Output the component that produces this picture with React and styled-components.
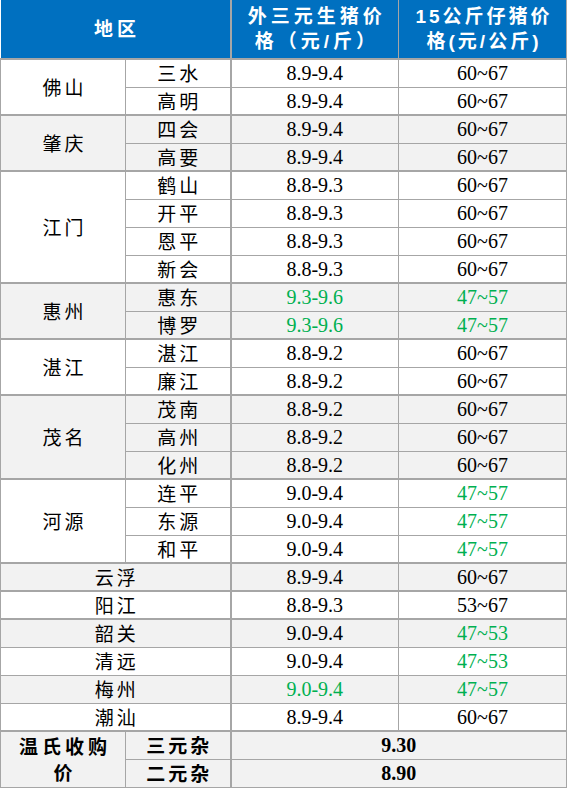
import React from "react";
import styled, { createGlobalStyle } from "styled-components";

const GlobalStyle = createGlobalStyle`
  html, body {
    margin: 0;
    padding: 0;
    background: #fff;
  }
`;

const GREEN = "#00B050";
const LINE = "#A6A6A6";

const groups = [
  {
    name: "佛山",
    gray: false,
    items: [
      ["三水", "8.9-9.4", "60~67"],
      ["高明", "8.9-9.4", "60~67"],
    ],
  },
  {
    name: "肇庆",
    gray: true,
    items: [
      ["四会", "8.9-9.4", "60~67"],
      ["高要", "8.9-9.4", "60~67"],
    ],
  },
  {
    name: "江门",
    gray: false,
    items: [
      ["鹤山", "8.8-9.3", "60~67"],
      ["开平", "8.8-9.3", "60~67"],
      ["恩平", "8.8-9.3", "60~67"],
      ["新会", "8.8-9.3", "60~67"],
    ],
  },
  {
    name: "惠州",
    gray: true,
    items: [
      ["惠东", "9.3-9.6", "47~57", true, true],
      ["博罗", "9.3-9.6", "47~57", true, true],
    ],
  },
  {
    name: "湛江",
    gray: false,
    items: [
      ["湛江", "8.8-9.2", "60~67"],
      ["廉江", "8.8-9.2", "60~67"],
    ],
  },
  {
    name: "茂名",
    gray: true,
    items: [
      ["茂南", "8.8-9.2", "60~67"],
      ["高州", "8.8-9.2", "60~67"],
      ["化州", "8.8-9.2", "60~67"],
    ],
  },
  {
    name: "河源",
    gray: false,
    items: [
      ["连平", "9.0-9.4", "47~57", false, true],
      ["东源", "9.0-9.4", "47~57", false, true],
      ["和平", "9.0-9.4", "47~57", false, true],
    ],
  },
];

const singles = [
  { name: "云浮", gray: true, thick: true, price: "8.9-9.4", piglet: "60~67" },
  { name: "阳江", gray: false, thick: true, price: "8.8-9.3", piglet: "53~67" },
  { name: "韶关", gray: true, thick: true, price: "9.0-9.4", piglet: "47~53", pg: true },
  { name: "清远", gray: false, thick: false, price: "9.0-9.4", piglet: "47~53", pg: true },
  { name: "梅州", gray: true, thick: false, price: "9.0-9.4", piglet: "47~57", cg: true, pg: true },
  { name: "潮汕", gray: false, thick: false, price: "8.9-9.4", piglet: "60~67" },
];

export default function App() {
  return (
    <>
      <GlobalStyle />
      <Table>
        <colgroup>
          <col style={{ width: 125 }} />
          <col style={{ width: 105 }} />
          <col style={{ width: 168 }} />
          <col style={{ width: 168 }} />
        </colgroup>
        <thead>
          <tr>
            <Head colSpan={2} thickRight>地区</Head>
            <Head>外三元生猪价<br />格（元/斤）</Head>
            <Head narrow>15公斤仔猪价<br />格(元/公斤)</Head>
          </tr>
        </thead>
        <tbody>
          {groups.map((g) =>
            g.items.map(([sub, price, piglet, cg, pg], i) => (
              <Row key={sub + g.name} gray={g.gray}>
                {i === 0 && (
                  <Cell rowSpan={g.items.length} thickTop>
                    <Name>{g.name}</Name>
                  </Cell>
                )}
                <Cell thickTop={i === 0} thickRight>
                  <Name>{sub}</Name>
                </Cell>
                <Cell thickTop={i === 0} green={cg}>{price}</Cell>
                <Cell thickTop={i === 0} green={pg}>{piglet}</Cell>
              </Row>
            ))
          )}
          {singles.map((s) => (
            <Row key={s.name} gray={s.gray}>
              <Cell colSpan={2} thickTop={s.thick} thickRight>
                <Name>{s.name}</Name>
              </Cell>
              <Cell thickTop={s.thick} green={s.cg}>{s.price}</Cell>
              <Cell thickTop={s.thick} green={s.pg}>{s.piglet}</Cell>
            </Row>
          ))}
          <Row gray>
            <Cell rowSpan={2} thickTop>
              <Buy>温氏收购<br />价</Buy>
            </Cell>
            <Cell thickTop thickRight>
              <Kind>三元杂</Kind>
            </Cell>
            <Cell colSpan={2} thickTop bold>9.30</Cell>
          </Row>
          <Row gray>
            <Cell thickRight>
              <Kind>二元杂</Kind>
            </Cell>
            <Cell colSpan={2} bold>8.90</Cell>
          </Row>
        </tbody>
      </Table>
    </>
  );
}

const Table = styled.table`
  width: 566px;
  table-layout: fixed;
  border-collapse: collapse;
  font-family: "Liberation Serif", "Noto Sans CJK SC", serif;
  color: #000;
`;

const Head = styled.th`
  height: 58px;
  padding: 0 0 0 ${(p) => (p.narrow ? "3px" : "4px")};
  background: #0070C0;
  color: #fff;
  font-family: "Liberation Sans", "Noto Sans CJK SC", sans-serif;
  font-weight: bold;
  font-size: 19px;
  letter-spacing: ${(p) => (p.narrow ? "3px" : "4px")};
  line-height: 25px;
  text-align: center;
  vertical-align: middle;
  border-left: ${(p) => (p.thickRight ? "none" : `1px solid ${LINE}`)};
  border-right: ${(p) => (p.thickRight ? `2px solid ${LINE}` : `1px solid ${LINE}`)};
`;

const Row = styled.tr`
  height: 28px;
  background: ${(p) => (p.gray ? "#F2F2F2" : "#fff")};
`;

const Cell = styled.td`
  padding: 0;
  text-align: center;
  vertical-align: middle;
  font-size: 20px;
  line-height: 20px;
  font-weight: ${(p) => (p.bold ? "bold" : "normal")};
  color: ${(p) => (p.green ? GREEN : "#000")};
  border: 1px solid ${LINE};
  border-top-width: ${(p) => (p.thickTop ? "2px" : "1px")};
  border-right-width: ${(p) => (p.thickRight ? "2px" : "1px")};
`;

const Name = styled.div`
  font-family: "Noto Sans CJK SC", sans-serif;
  font-size: 19px;
  letter-spacing: 3px;
  padding-left: 3px;
  line-height: 20px;
`;

const Buy = styled.div`
  font-family: "Noto Sans CJK SC", sans-serif;
  font-weight: bold;
  font-size: 19px;
  letter-spacing: 4px;
  padding-left: 4px;
  line-height: 26px;
`;

const Kind = styled.div`
  font-family: "Noto Sans CJK SC", sans-serif;
  font-weight: bold;
  font-size: 19px;
  letter-spacing: 3px;
  padding-left: 3px;
  line-height: 20px;
`;
